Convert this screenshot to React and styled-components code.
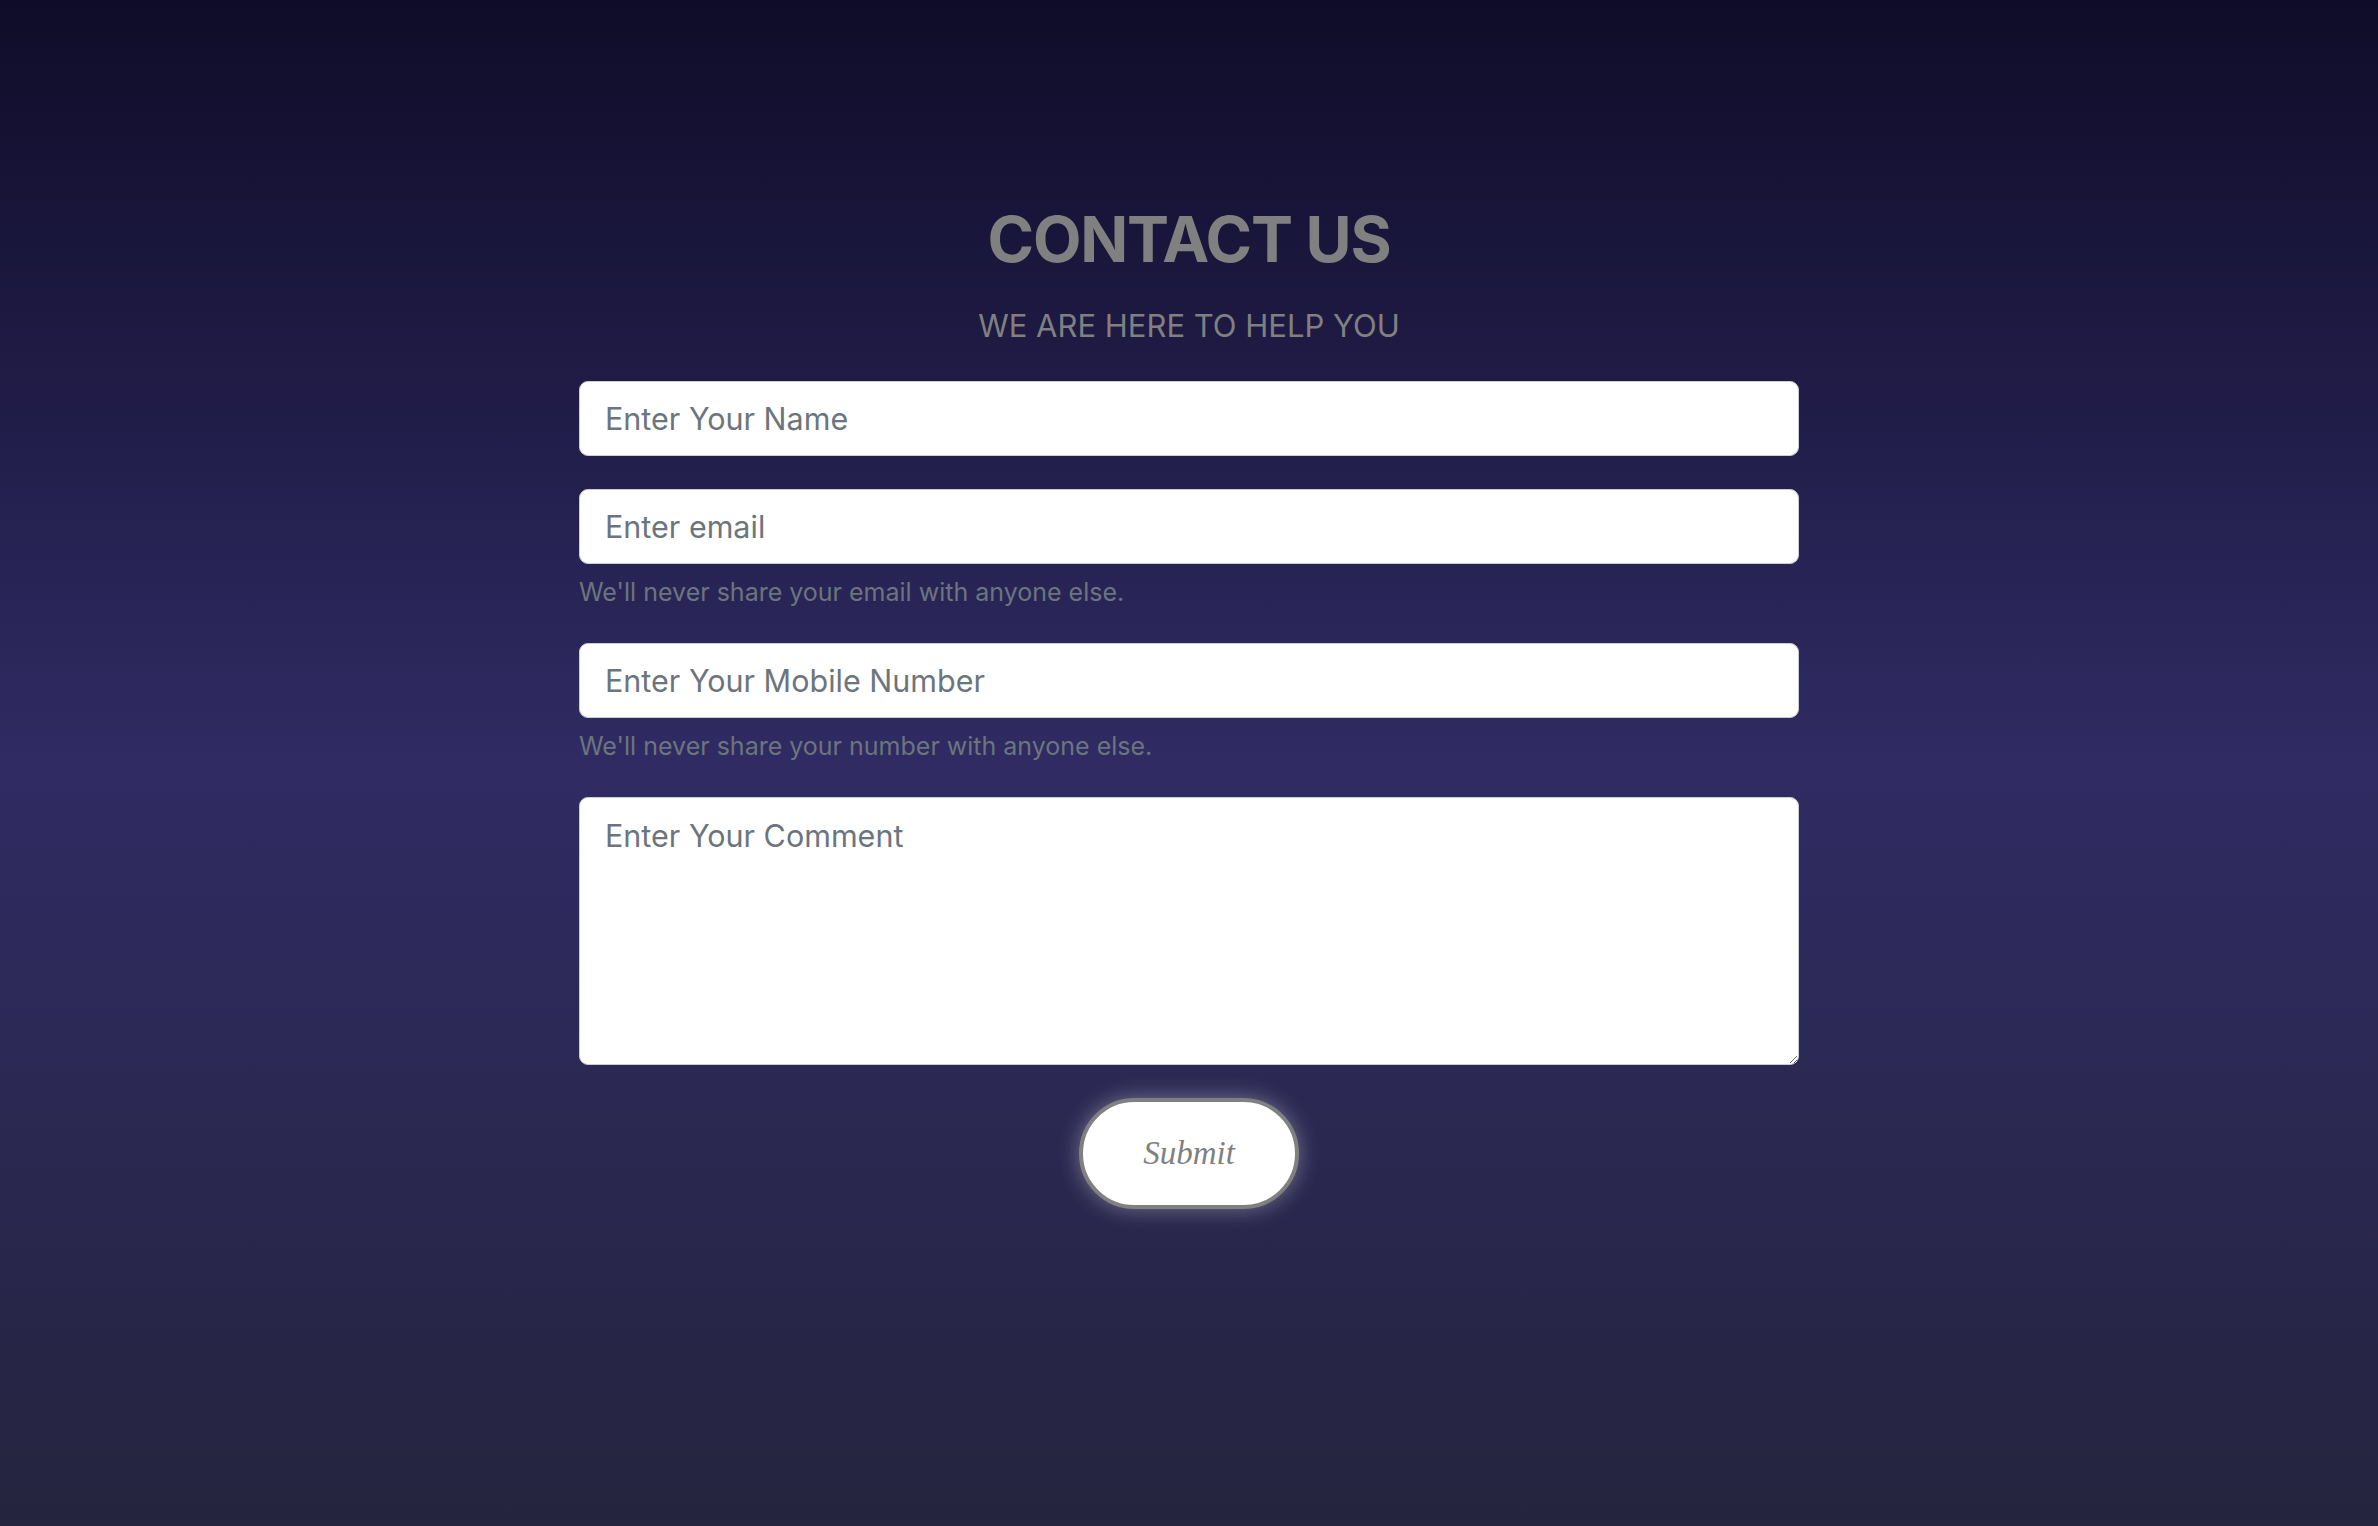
import React from "react";
import styled, { createGlobalStyle } from "styled-components";

const Global = createGlobalStyle`
  html, body { margin: 0; padding: 0; }
  body {
    min-height: 100vh;
    background: linear-gradient(to bottom, #0f0c29 0%, #302b63 50%, #24243e 100%);
    font-family: Inter, "Noto Sans", sans-serif;
  }
  #root { min-height: 100vh; }
`;

const Page = styled.main`
  min-height: 1526px;
  box-sizing: border-box;
  padding-top: 201px;
  display: flex;
  justify-content: center;
`;

const Form = styled.form`
  width: 1220px;
  display: flex;
  flex-direction: column;
`;

const Title = styled.h1`
  margin: 0;
  text-align: center;
  font-family: Inter, sans-serif;
  font-weight: 700;
  font-size: 63px;
  line-height: 76px;
  letter-spacing: -1.2px;
  color: #808080;
`;

const Subtitle = styled.p`
  margin: 29px 0 0;
  text-align: center;
  font-family: Inter, sans-serif;
  font-weight: 400;
  font-size: 31px;
  line-height: 40px;
  color: #808080;
`;

const Field = styled.input`
  display: block;
  box-sizing: border-box;
  width: 100%;
  height: 75px;
  margin-top: ${(p) => p.$gap}px;
  padding: 0 25px;
  border: 1.5px solid #c9ced6;
  border-radius: 9px;
  background: #fff;
  font-family: Inter, sans-serif;
  font-size: 30.5px;
  color: #212529;
  outline: none;
  &::placeholder { color: #6c757d; opacity: 1; }
`;

const Comment = styled.textarea`
  display: block;
  box-sizing: border-box;
  width: 100%;
  height: 268px;
  margin-top: 32px;
  padding: 15px 25px;
  border: 1.5px solid #c9ced6;
  border-radius: 9px;
  background: #fff;
  font-family: Inter, sans-serif;
  font-size: 30.5px;
  line-height: 45px;
  color: #212529;
  outline: none;
  resize: vertical;
  &::placeholder { color: #6c757d; opacity: 1; }
`;

const Help = styled.small`
  display: block;
  margin-top: 10px;
  font-family: Inter, sans-serif;
  font-size: 25px;
  line-height: 37px;
  color: #6c757d;
`;

const SubmitButton = styled.button`
  align-self: center;
  margin-top: 33px;
  width: 220px;
  height: 111px;
  box-sizing: border-box;
  border: 4px solid #808080;
  border-radius: 60px;
  background: #fff;
  box-shadow: 0 0 22px rgba(255, 255, 255, 0.35);
  font-family: "Liberation Serif", "DejaVu Serif", serif;
  font-style: italic;
  font-size: 33px;
  color: #808080;
  cursor: pointer;
`;

export default function App() {
  return (
    <>
      <Global />
      <Page>
        <Form onSubmit={(e) => e.preventDefault()}>
          <Title>CONTACT US</Title>
          <Subtitle>WE ARE HERE TO HELP YOU</Subtitle>
          <Field $gap={35} type="text" placeholder="Enter Your Name" />
          <Field $gap={33} type="email" placeholder="Enter email" />
          <Help>We'll never share your email with anyone else.</Help>
          <Field $gap={32} type="tel" placeholder="Enter Your Mobile Number" />
          <Help>We'll never share your number with anyone else.</Help>
          <Comment placeholder="Enter Your Comment" />
          <SubmitButton type="submit">Submit</SubmitButton>
        </Form>
      </Page>
    </>
  );
}
